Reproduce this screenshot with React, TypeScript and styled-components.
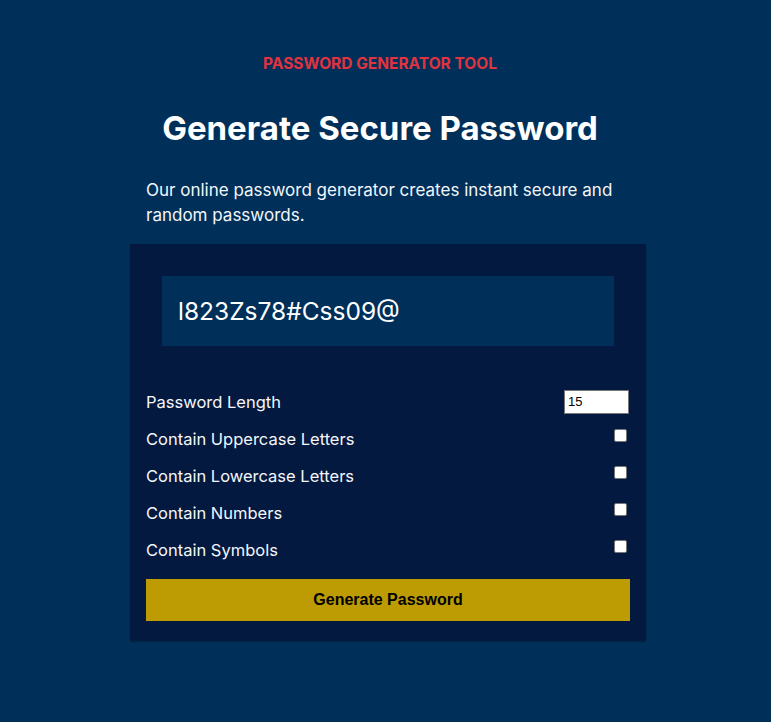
import React from "react";
import styled, { createGlobalStyle } from "styled-components";

const Global = createGlobalStyle`
  html, body { margin: 0; padding: 0; background: #003059; }
  body { font-family: "Inter", "Noto Sans", sans-serif; color: #ffffff; }
  * { box-sizing: border-box; }
`;

const Page = styled.div`
  min-height: 722px;
  background: #003059;
  padding-top: 55px;
`;

const Wrapper = styled.div`
  width: 516px;
  margin-left: 130px;
  display: flex;
  flex-direction: column;
`;

const Header = styled.header`
  padding-right: 16px;
  text-align: center;
`;

const Eyebrow = styled.div`
  color: #e0333f;
  font-size: 15.5px;
  font-weight: 700;
  line-height: 18px;
`;

const Title = styled.h1`
  margin: 35px 0 0;
  font-size: 33px;
  font-weight: 700;
  line-height: 40px;
  color: #ffffff;
`;

const Intro = styled.p`
  margin: 30px 16px 16px;
  font-size: 17px;
  line-height: 25px;
  color: #f4f6fa;
`;

const Card = styled.section`
  background: #04193f;
  padding: 32px 16px 20px;
  box-shadow: 0 1px 2px rgba(0, 0, 0, 0.25);
  display: flex;
  flex-direction: column;
`;

const Output = styled.div`
  margin: 0 16px 37px;
  height: 70px;
  background: #003059;
  padding: 0 16px;
  display: flex;
  align-items: center;
  font-size: 24.5px;
  color: #ffffff;
`;

const Options = styled.div`
  display: flex;
  flex-direction: column;
`;

const Row = styled.label`
  height: 37px;
  display: flex;
  align-items: center;
  justify-content: space-between;
  font-size: 16.5px;
  color: #f4f6fa;
`;

const NumberInput = styled.input`
  width: 65px;
  height: 24px;
  border: 1px solid #767676;
  background: #fff;
  font-family: Arial, "Liberation Sans", sans-serif;
  font-size: 13px;
  padding: 1px 3px;
  color: #000;
  margin: 0 1px 0 0;
`;

const Check = styled.input`
  width: 13px;
  height: 13px;
  margin: 0 3px 6px 0;
  appearance: none;
  background: #fff;
  border: 1px solid #767676;
  border-radius: 2px;
`;

const Button = styled.button`
  margin-top: 11px;
  height: 42px;
  width: 100%;
  background: #bc9c02;
  border: none;
  color: #000;
  font-family: Arial, "Liberation Sans", sans-serif;
  font-weight: 700;
  font-size: 16px;
`;

const options = [
  "Contain Uppercase Letters",
  "Contain Lowercase Letters",
  "Contain Numbers",
  "Contain Symbols",
];

export default function App() {
  return (
    <>
      <Global />
      <Page>
        <Wrapper>
          <Header>
            <Eyebrow>PASSWORD GENERATOR TOOL</Eyebrow>
            <Title>Generate Secure Password</Title>
          </Header>
          <Intro>
            Our online password generator creates instant secure and random
            passwords.
          </Intro>
          <Card>
            <Output>l823Zs78#Css09@</Output>
            <Options>
              <Row>
                Password Length
                <NumberInput type="number" defaultValue={15} />
              </Row>
              {options.map((o) => (
                <Row key={o}>
                  {o}
                  <Check type="checkbox" />
                </Row>
              ))}
            </Options>
            <Button>Generate Password</Button>
          </Card>
        </Wrapper>
      </Page>
    </>
  );
}
